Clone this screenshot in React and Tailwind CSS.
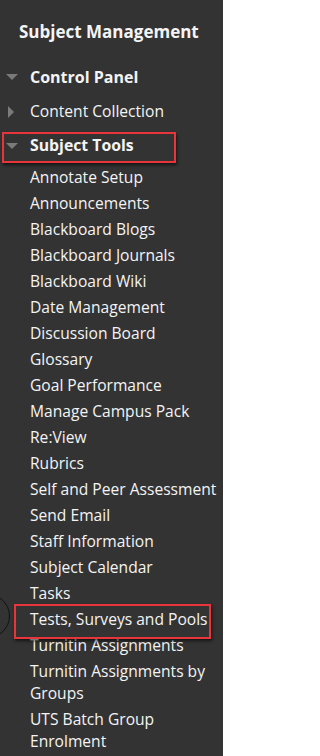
import React from 'react';

const tools = [
  'Annotate Setup',
  'Announcements',
  'Blackboard Blogs',
  'Blackboard Journals',
  'Blackboard Wiki',
  'Date Management',
  'Discussion Board',
  'Glossary',
  'Goal Performance',
  'Manage Campus Pack',
  'Re:View',
  'Rubrics',
  'Self and Peer Assessment',
  'Send Email',
  'Staff Information',
  'Subject Calendar',
  'Tasks',
  'Tests, Surveys and Pools',
  'Turnitin Assignments',
  'Turnitin Assignments by Groups',
  'UTS Batch Group Enrolment',
];

function DownArrow() {
  return (
    <svg width="12" height="7" viewBox="0 0 12 7" className="shrink-0">
      <path d="M0 0 L12 0 L6 6 Z" fill="#7a7a7a" />
    </svg>
  );
}

function RightArrow() {
  return (
    <svg width="7" height="12" viewBox="0 0 7 12" className="shrink-0">
      <path d="M0 0 L6 6 L0 12 Z" fill="#7a7a7a" />
    </svg>
  );
}

export default function App() {
  return (
    <div
      className="relative w-[223px] h-[756px] overflow-hidden bg-[#333333] text-[#f4f4f4]"
      style={{ fontFamily: '"Open Sans", "Noto Sans", sans-serif' }}
    >
      {/* заголовок */}
      <h2 className="pt-[21px] pl-[19px] text-[17px] leading-[22px] font-bold">
        Subject Management
      </h2>

      <div className="mt-[23px] flex items-center h-[22px]">
        <div className="w-[30px] flex justify-center pr-[6px] pt-[1px]"><DownArrow /></div>
        <span className="text-[16px] font-bold">Control Panel</span>
      </div>

      <div className="mt-[13px] flex items-center h-[22px]">
        <div className="w-[30px] flex justify-center pr-[7px]"><RightArrow /></div>
        <span className="text-[15.6px]">Content Collection</span>
      </div>

      <div className="mt-[12px] flex items-center h-[22px]">
        <div className="w-[30px] flex justify-center pr-[6px] pt-[1px]"><DownArrow /></div>
        <span className="text-[15.8px] font-bold">Subject Tools</span>
      </div>

      <ul className="mt-[9px] pl-[30px] pr-[4px] flex flex-col gap-[4px] text-[15.6px] leading-[22px]">
        {tools.map(t => (
          <li key={t}>{t}</li>
        ))}
      </ul>

      {/* виділення червоними рамками */}
      <div className="absolute left-[2px] top-[132px] w-[174px] h-[31px] border-2 border-[#e8353b] shadow-[1px_2px_3px_rgba(0,0,0,0.6)]" />
      <div className="absolute left-[14px] top-[604px] w-[197px] h-[35px] border-2 border-[#e8353b] shadow-[1px_2px_3px_rgba(0,0,0,0.6)]" />
      <div className="absolute left-[-34px] top-[594px] w-[44px] h-[44px] rounded-full border border-[#111]" />
    </div>
  );
}
